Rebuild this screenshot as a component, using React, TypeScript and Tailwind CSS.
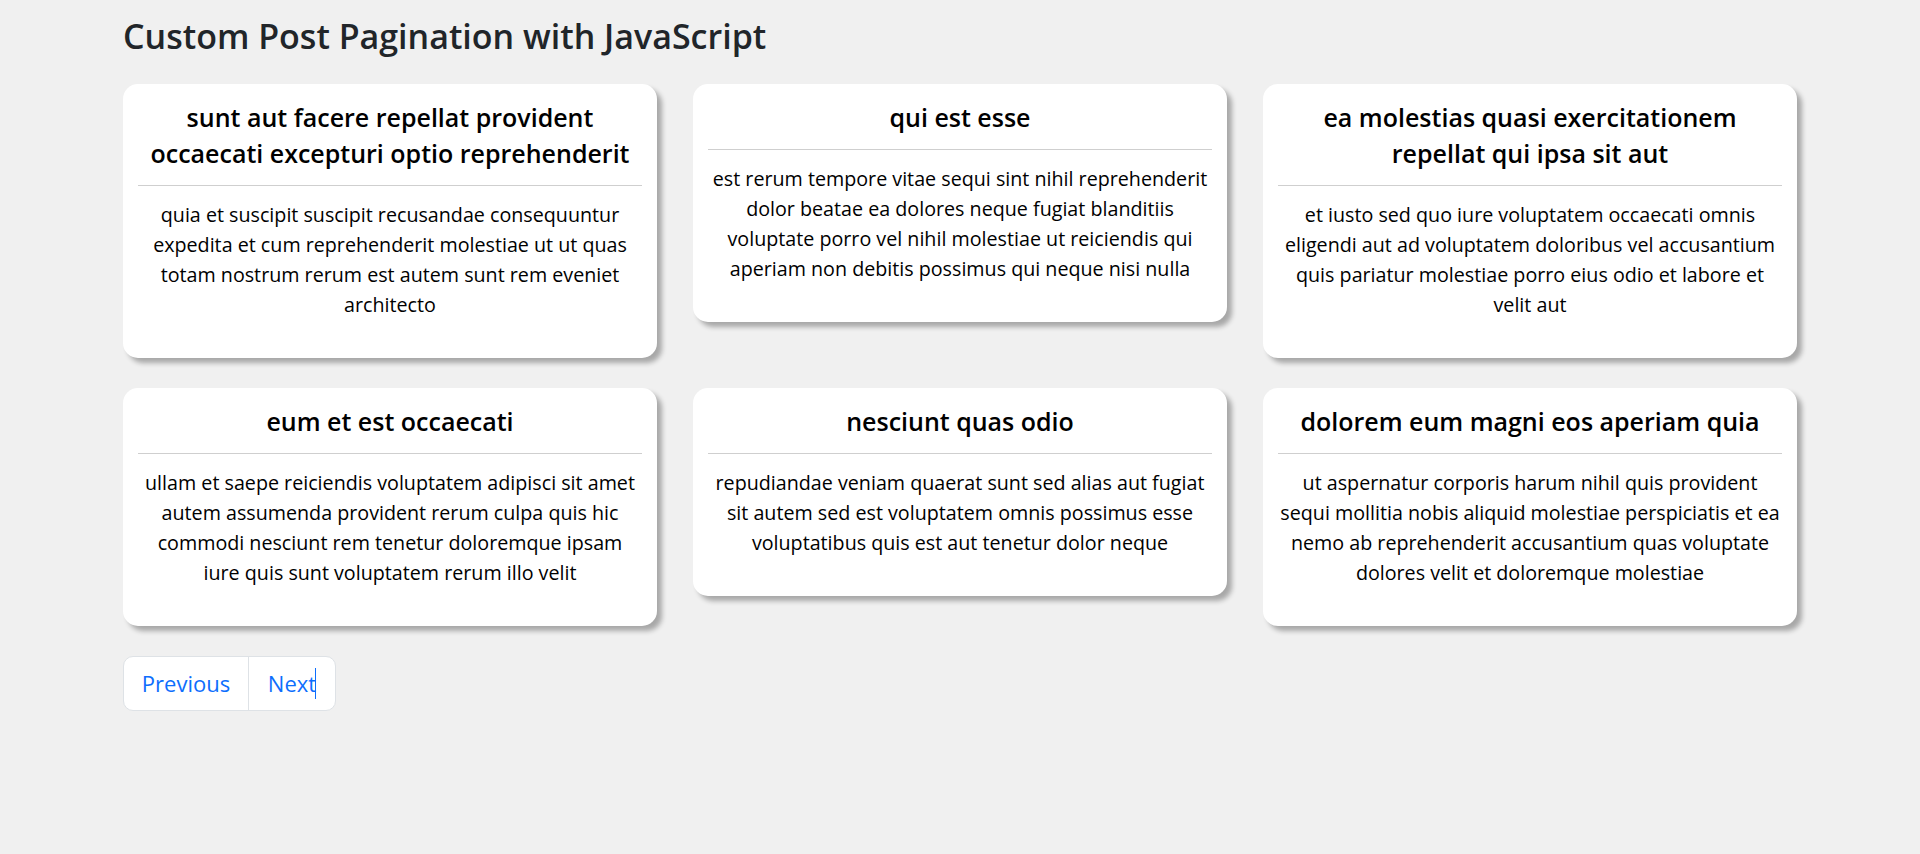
import React from "react";

interface Post {
  id: number;
  title: string;
  body: string;
}

const posts: Post[] = [
  {
    id: 1,
    title: "sunt aut facere repellat provident occaecati excepturi optio reprehenderit",
    body: "quia et suscipit suscipit recusandae consequuntur expedita et cum reprehenderit molestiae ut ut quas totam nostrum rerum est autem sunt rem eveniet architecto",
  },
  {
    id: 2,
    title: "qui est esse",
    body: "est rerum tempore vitae sequi sint nihil reprehenderit dolor beatae ea dolores neque fugiat blanditiis voluptate porro vel nihil molestiae ut reiciendis qui aperiam non debitis possimus qui neque nisi nulla",
  },
  {
    id: 3,
    title: "ea molestias quasi exercitationem repellat qui ipsa sit aut",
    body: "et iusto sed quo iure voluptatem occaecati omnis eligendi aut ad voluptatem doloribus vel accusantium quis pariatur molestiae porro eius odio et labore et velit aut",
  },
  {
    id: 4,
    title: "eum et est occaecati",
    body: "ullam et saepe reiciendis voluptatem adipisci sit amet autem assumenda provident rerum culpa quis hic commodi nesciunt rem tenetur doloremque ipsam iure quis sunt voluptatem rerum illo velit",
  },
  {
    id: 5,
    title: "nesciunt quas odio",
    body: "repudiandae veniam quaerat sunt sed alias aut fugiat sit autem sed est voluptatem omnis possimus esse voluptatibus quis est aut tenetur dolor neque",
  },
  {
    id: 6,
    title: "dolorem eum magni eos aperiam quia",
    body: "ut aspernatur corporis harum nihil quis provident sequi mollitia nobis aliquid molestiae perspiciatis et ea nemo ab reprehenderit accusantium quas voluptate dolores velit et doloremque molestiae",
  },
];

function PostCard({ post }: { post: Post }) {
  return (
    <div className="rounded-[15px] bg-white p-[15px] text-center shadow-[5px_5px_5px_rgba(0,0,0,0.3)]">
      <h3 className="mb-[14px] text-[25px] font-semibold leading-[36px] text-black">{post.title}</h3>
      <hr className="border-t border-[#cfcfcf]" />
      <p className="mt-[14px] mb-[23px] text-[19.7px] leading-[30px] text-black">{post.body}</p>
    </div>
  );
}

export default function App() {
  return (
    <div className="min-h-[854px] bg-[#f0f0f0] font-['Open_Sans',sans-serif]">
      <div className="px-[123px] pt-[12px]">
        <h1 className="mb-[24px] text-[34px] font-semibold leading-[48px] text-[#212529]">
          Custom Post Pagination with JavaScript
        </h1>

        <div className="grid grid-cols-3 items-start gap-x-[36px] gap-y-[30px]">
          {posts.map((post) => (
            <PostCard key={post.id} post={post} />
          ))}
        </div>

        <nav className="mt-[30px] flex">
          <div className="flex h-[55px] overflow-hidden rounded-[10px] border border-[#dee2e6] bg-white text-[22px] text-[#0d6efd]">
            <button type="button" className="w-[125px] border-r border-[#dee2e6]">
              Previous
            </button>
            <button type="button" className="relative w-[86px]">
              Next
              <span className="absolute left-[66px] top-[11px] h-[31px] w-px bg-[#0d6efd]" />
            </button>
          </div>
        </nav>
      </div>
    </div>
  );
}
